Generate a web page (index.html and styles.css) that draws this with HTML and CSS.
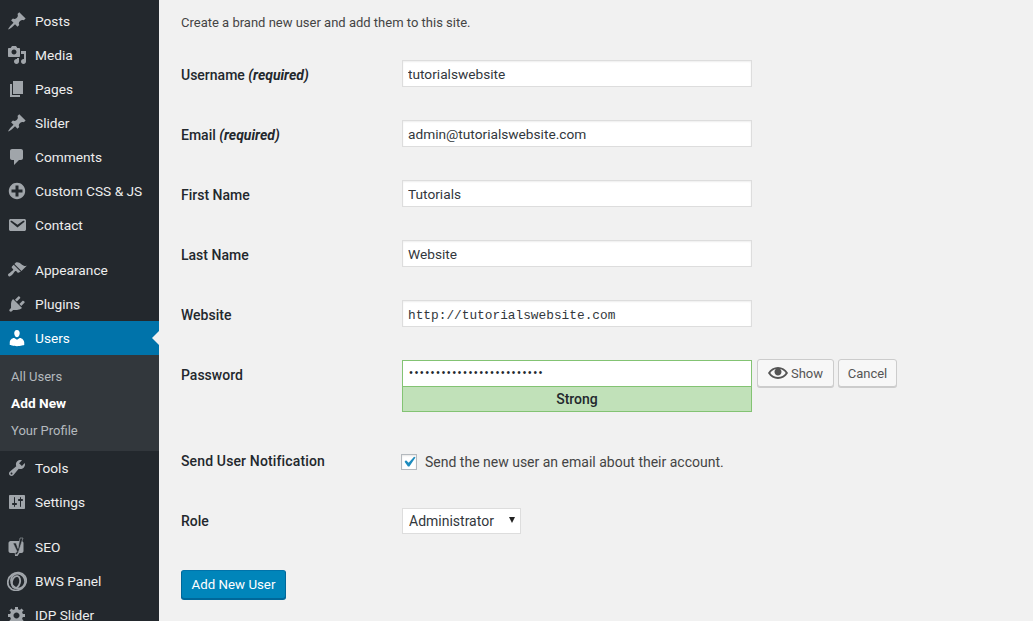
FILE: index.html
```html
<!DOCTYPE html>
<html lang="en">
<head>
    <meta charset="UTF-8">
    <title>Add New User</title>
    <link rel="stylesheet" href="styles.css">
</head>
<body>
    <nav class="sidebar">
        <ul class="menu">
            <li><svg viewBox="0 0 20 20"><path d="M10.44 3.02l1.82-1.82 6.36 6.35-1.83 1.82c-1.05-.68-2.48-.57-3.41.36l-.75.75c-.92.93-1.04 2.35-.35 3.41l-1.83 1.82-2.41-2.41-2.8 2.79c-.42.42-3.38 2.71-3.8 2.29s1.86-3.39 2.28-3.81l2.79-2.79L4.1 9.36l1.83-1.82c1.05.69 2.48.57 3.4-.36l.75-.75c.93-.92 1.05-2.35.36-3.41z"/></svg>Posts</li>
            <li><svg viewBox="0 0 20 20"><path d="M13 11V4c0-.55-.45-1-1-1h-1.67L9 1H5L3.67 3H2c-.55 0-1 .45-1 1v7c0 .55.45 1 1 1h10c.55 0 1-.45 1-1zM7 4.5c1.38 0 2.5 1.12 2.5 2.5S8.38 9.5 7 9.5 4.5 8.38 4.5 7 5.62 4.5 7 4.5zM14 6h5v10.5c0 1.38-1.12 2.5-2.5 2.5S14 17.88 14 16.5s1.12-2.5 2.5-2.5c.17 0 .34.02.5.05V9h-3V6zm-4 8.05V13h2v3.5c0 1.38-1.12 2.5-2.5 2.5S7 17.88 7 16.5 8.12 14 9.5 14c.17 0 .34.02.5.05z"/></svg>Media</li>
            <li><svg viewBox="0 0 20 20"><path d="M6 15V2h10v13H6zm-1 1h8v2H3V5h2v11z"/></svg>Pages</li>
            <li><svg viewBox="0 0 20 20"><path d="M10.44 3.02l1.82-1.82 6.36 6.35-1.83 1.82c-1.05-.68-2.48-.57-3.41.36l-.75.75c-.92.93-1.04 2.35-.35 3.41l-1.83 1.82-2.41-2.41-2.8 2.79c-.42.42-3.38 2.71-3.8 2.29s1.86-3.39 2.28-3.81l2.79-2.79L4.1 9.36l1.83-1.82c1.05.69 2.48.57 3.4-.36l.75-.75c.93-.92 1.05-2.35.36-3.41z"/></svg>Slider</li>
            <li><svg viewBox="0 0 20 20"><path d="M5 2h9c1.1 0 2 .9 2 2v7c0 1.1-.9 2-2 2h-2l-5 5v-5H5c-1.1 0-2-.9-2-2V4c0-1.1.9-2 2-2z"/></svg>Comments</li>
            <li><svg viewBox="0 0 20 20"><path d="M15.8 4.2c3.2 3.21 3.2 8.39 0 11.6-3.21 3.2-8.39 3.2-11.6 0C1 12.59 1 7.41 4.2 4.2 7.41 1 12.59 1 15.8 4.2zm-4.3 11.3v-4h4v-3h-4v-4h-3v4h-4v3h4v4h3z"/></svg>Custom CSS &amp; JS</li>
            <li><svg viewBox="0 0 20 20"><path d="M3.87 4h13.25C18.37 4 19 4.59 19 5.79v8.42c0 1.19-.63 1.79-1.88 1.79H3.87c-1.25 0-1.88-.6-1.88-1.79V5.79c0-1.2.63-1.79 1.88-1.79zm6.62 8.6l6.74-5.53c.24-.2.43-.66.13-1.07-.29-.41-.82-.42-1.17-.17l-5.7 3.86L4.8 5.83c-.35-.25-.88-.24-1.17.17-.3.41-.11.87.13 1.07z"/></svg>Contact</li>
        </ul>
        <ul class="menu">
            <li><svg viewBox="0 0 20 20"><path d="M14.48 11.06L7.41 3.99l1.5-1.5c.5-.56 2.3-.47 3.51.32 1.21.8 1.43 1.28 2.91 2.1 1.18.64 2.45 1.26 4.45.85zm-.71.71L6.7 4.7 4.93 6.47c-.39.39-.39 1.02 0 1.41l1.06 1.06c.39.39.39 1.03 0 1.42-.6.6-1.43 1.11-2.21 1.69-.35.26-.7.53-1.01.84C1.43 13.23.4 14.81 1.2 15.6l.53.53c.79.8 2.38-.22 3.71-1.56.31-.31.58-.66.85-1.02.57-.78 1.08-1.61 1.69-2.21.39-.39 1.02-.39 1.41 0l1.06 1.06c.39.39 1.02.39 1.41 0z"/></svg>Appearance</li>
            <li><svg viewBox="0 0 20 20"><path d="M13.11 4.36L9.87 7.6 8 5.73l3.24-3.24c.35-.34 1.05-.2 1.56.32.52.51.66 1.21.31 1.55zm-8 1.77l.91-1.12 9.01 9.01-1.19.84c-.71.71-2.63 1.16-3.82 1.16H6.14L4.9 17.26c-.59.59-1.54.59-2.12 0-.59-.58-.59-1.53 0-2.12l1.24-1.24v-3.88c0-1.13.4-3.19 1.09-3.89zm7.26 3.97l3.24-3.24c.34-.35 1.04-.21 1.55.31.52.51.66 1.21.31 1.55l-3.24 3.25z"/></svg>Plugins</li>
            <li class="current"><svg viewBox="0 0 20 20"><path d="M10 9.25c-2.27 0-2.73-3.44-2.73-3.44C7 4.02 7.82 2 9.97 2c2.16 0 2.98 2.02 2.71 3.81 0 0-.41 3.44-2.68 3.44zm0 2.57L12.72 10c2.39 0 4.52 2.33 4.52 4.53v2.49s-3.65 1.13-7.24 1.13c-3.65 0-7.24-1.13-7.24-1.13v-2.49c0-2.25 1.94-4.48 4.47-4.48z"/></svg>Users</li>
        </ul>
        <ul class="submenu">
            <li>All Users</li>
            <li class="active">Add New</li>
            <li>Your Profile</li>
        </ul>
        <ul class="menu">
            <li><svg viewBox="0 0 20 20"><path d="M16.68 9.77c-1.34 1.34-3.3 1.67-4.95.99l-5.41 6.52c-.99.99-2.59.99-3.58 0s-.99-2.59 0-3.57l6.52-5.42c-.68-1.65-.35-3.61.99-4.95 1.28-1.28 3.12-1.62 4.72-1.06l-2.89 2.89 2.82 2.82 2.86-2.87c.53 1.58.18 3.39-1.08 4.65zM3.81 16.21c.4.39 1.04.39 1.43 0 .4-.4.4-1.04 0-1.43-.39-.4-1.03-.4-1.43 0-.39.39-.39 1.03 0 1.43z"/></svg>Tools</li>
            <li><svg viewBox="0 0 20 20"><path fill-rule="evenodd" d="M18 16V4c0-.55-.45-1-1-1H3c-.55 0-1 .45-1 1v12c0 .55.45 1 1 1h14c.55 0 1-.45 1-1zM8 11h1c.55 0 1 .45 1 1s-.45 1-1 1H8v1.5c0 .28-.22.5-.5.5s-.5-.22-.5-.5V13H6c-.55 0-1-.45-1-1s.45-1 1-1h1V5.5c0-.28.22-.5.5-.5s.5.22.5.5V11zm5-2h-1c-.55 0-1-.45-1-1s.45-1 1-1h1V5.5c0-.28.22-.5.5-.5s.5.22.5.5V7h1c.55 0 1 .45 1 1s-.45 1-1 1h-1v5.5c0 .28-.22.5-.5.5s-.5-.22-.5-.5V9z"/></svg>Settings</li>
        </ul>
        <ul class="menu">
            <li><svg viewBox="0 0 20 20"><path d="M3.5 4h11c1 0 2 1 2 2v8c0 1-1 2-2 2h-2l-2 3H8v-3H3.5c-1 0-2-1-2-2V6c0-1 1-2 2-2z"/><path class="cut" d="M13 1h3l-4.500 14c-.5 1.500-1.500 2.500-3 3l-.5-2c1-.3 1.600-.8 2-1.600L6 6h3l2 5.500z"/></svg>SEO</li>
            <li><svg viewBox="0 0 20 20" class="rings"><ellipse cx="10" cy="10.500" rx="9.500" ry="8.500" transform="rotate(-35 10 10.500)"/><ellipse cx="11" cy="10" rx="7" ry="7.500" transform="rotate(-20 11 10)"/><ellipse cx="9" cy="11" rx="4" ry="6" transform="rotate(15 9 11)"/></svg>BWS Panel</li>
            <li><svg viewBox="0 0 20 20"><path d="M18 12h-2.180c-.17.7-.44 1.350-.81 1.930l1.540 1.540-2.100 2.100-1.540-1.540c-.58.36-1.230.63-1.910.79V19H8v-2.180c-.68-.16-1.330-.43-1.910-.79l-1.540 1.540-2.120-2.120 1.540-1.540c-.36-.58-.63-1.230-.79-1.910H1V9.030h2.170c.16-.7.44-1.350.8-1.940L2.430 5.550l2.100-2.100 1.540 1.540c.58-.37 1.240-.64 1.930-.81V2h3v2.180c.68.16 1.330.43 1.910.79l1.540-1.540 2.120 2.120-1.540 1.540c.36.59.64 1.240.8 1.940H18V12zm-8.500 1.500c1.660 0 3-1.340 3-3s-1.340-3-3-3-3 1.340-3 3 1.340 3 3 3z"/></svg>IDP Slider</li>
        </ul>
    </nav>
    <main class="content">
        <p class="intro">Create a brand new user and add them to this site.</p>
        <form class="user-form">
            <div class="row">
                <label for="username">Username <em>(required)</em></label>
                <input id="username" class="field" type="text" value="tutorialswebsite">
            </div>
            <div class="row">
                <label for="email">Email <em>(required)</em></label>
                <input id="email" class="field" type="text" value="admin@tutorialswebsite.com">
            </div>
            <div class="row">
                <label for="first">First Name</label>
                <input id="first" class="field" type="text" value="Tutorials">
            </div>
            <div class="row">
                <label for="last">Last Name</label>
                <input id="last" class="field" type="text" value="Website">
            </div>
            <div class="row">
                <label for="url">Website</label>
                <input id="url" class="field mono" type="text" value="http://tutorialswebsite.com">
            </div>
            <div class="row">
                <label for="pass">Password</label>
                <div class="pass-box">
                    <input id="pass" class="field pass" type="password" value="aaaaaaaaaaaaaaaaaaaaaaaaa">
                    <div class="meter">Strong</div>
                </div>
                <div class="pass-actions">
                    <button type="button" class="button show"><svg viewBox="0 0 20 20"><path d="M19.700 9.400C17.700 6 14 3.900 10 3.900S2.300 6 .3 9.400L0 10l.3.6c2 3.400 5.700 5.500 9.700 5.500s7.700-2.100 9.700-5.500l.3-.6-.3-.6zM10 14.100c-3.100 0-6-1.600-7.700-4.100C3.600 8 5.700 6.600 8 6.100c-.9.6-1.500 1.700-1.500 2.900 0 1.900 1.600 3.500 3.500 3.500s3.500-1.600 3.500-3.500c0-1.200-.6-2.300-1.500-2.900 2.300.5 4.400 1.900 5.700 3.900-1.700 2.500-4.600 4.100-7.700 4.100z"/></svg>Show</button>
                    <button type="button" class="button cancel">Cancel</button>
                </div>
            </div>
            <div class="row notify">
                <label for="notify">Send User Notification</label>
                <div class="check-line">
                    <input id="notify" class="check" type="checkbox" checked>
                    <span>Send the new user an email about their account.</span>
                </div>
            </div>
            <div class="row role">
                <label for="role">Role</label>
                <div class="select-wrap">
                    <select id="role" class="select">
                        <option>Administrator</option>
                    </select>
                </div>
            </div>
            <div class="submit-row">
                <button type="button" class="primary">Add New User</button>
            </div>
        </form>
    </main>
</body>
</html>
```

FILE: styles.css
```css
* {
    box-sizing: border-box;
}
html, body {
    height: 100%;
}
body {
    margin: 0;
    display: flex;
    overflow: hidden;
    background: #f1f1f1;
    color: #444;
    font-family: Roboto, sans-serif;
    font-size: 14px;
}

ul {
    list-style: none;
    margin: 0;
    padding: 0;
}

.sidebar {
    width: 159px;
    flex: none;
    padding-top: 4px;
    background: #23282d;
    color: #eee;
    font-size: 13.700px;
    height: 100%;
    overflow: hidden;
}
.menu {
    margin-bottom: 11px;
}
.menu li {
    display: flex;
    align-items: center;
    height: 34px;
    padding-left: 7px;
    gap: 8px;
}
.menu svg {
    width: 20px;
    height: 20px;
    flex: none;
    fill: #a0a5aa;
}
.menu svg .cut {
    fill: #23282d;
    stroke: #a0a5aa;
    stroke-width: .6;
}
.menu svg.rings {
    fill: none;
    stroke: #a0a5aa;
    stroke-width: 1.8;
}
.menu:has(+ .submenu) {
    margin-bottom: 0;
}
.menu li.current {
    position: relative;
    background: #0073aa;
    color: #fff;
}
.menu li.current svg {
    fill: #fff;
}
.menu li.current::after {
    content: "";
    position: absolute;
    right: 0;
    top: 10px;
    border: 7px solid transparent;
    border-left-width: 0;
    border-right-color: #f1f1f1;
}
.submenu {
    background: #32373c;
    padding: 8px 0 7px;
}
.submenu li {
    height: 27px;
    line-height: 27px;
    padding-left: 11px;
    font-size: 13px;
    color: #b4b9be;
}
.submenu li.active {
    color: #fff;
    font-size: 13.700px;
    font-weight: 700;
}

.content {
    flex: 1;
    padding: 0 0 0 22px;
}
.intro {
    margin: 14px 0 0;
    line-height: 18px;
    font-size: 13px;
}

.user-form {
    display: flex;
    flex-direction: column;
    gap: 33px;
    margin-top: 28px;
}
.row {
    display: flex;
    align-items: flex-start;
}
.row > label {
    width: 221px;
    flex: none;
    padding-top: 6px;
    line-height: 18px;
    color: #23282d;
    font-weight: 500;
}
.row > label em {
    font-weight: 700;
}
.field {
    display: block;
    width: 350px;
    height: 27px;
    margin: 0;
    padding: 3px 5px;
    border: 1px solid #ddd;
    box-shadow: inset 0 1px 2px rgba(0,0,0,.07);
    background: #fff;
    color: #32373c;
    font-family: inherit;
    font-size: 13.700px;
    outline: none;
}
.field.mono {
    padding: 5px 5px 1px;
    font-family: "Liberation Mono", monospace;
    font-size: 12.800px;
}
.pass-box {
    width: 350px;
}
.field.pass {
    font-family: "Liberation Mono", monospace;
    font-size: 10px;
    letter-spacing: -.6px;
    color: #23282d;
    border-color: #83c373;
    border-bottom: 0;
    box-shadow: none;
    height: 26px;
}
.meter {
    height: 26px;
    line-height: 24px;
    border: 1px solid #83c373;
    background: #c1e1b9;
    color: #23282d;
    text-align: center;
    font-weight: 500;
}
.pass-actions {
    display: flex;
    gap: 4px;
    margin: -1px 0 0 5px;
}
.button {
    display: flex;
    align-items: center;
    justify-content: center;
    gap: 3px;
    height: 28px;
    padding: 0;
    border: 1px solid #ccc;
    border-radius: 3px;
    box-shadow: 0 1px 0 #ccc;
    background: #f7f7f7;
    color: #555;
    font-family: inherit;
    font-size: 13px;
}
.button.show {
    width: 77px;
}
.button.cancel {
    width: 59px;
}
.button svg {
    width: 20px;
    height: 20px;
    fill: #555;
}

.notify {
    margin-top: 9px;
    height: 21px;
}
.notify > label {
    padding-top: 0;
    margin-top: -2px;
    letter-spacing: .14px;
}
.check-line {
    display: flex;
    align-items: center;
    gap: 8px;
    margin-left: -1px;
    height: 16px;
}
.check {
    appearance: none;
    width: 16px;
    height: 16px;
    margin: 0;
    border: 1px solid #b4b9be;
    background: #fff url("data:image/svg+xml,%3Csvg xmlns='http://www.w3.org/2000/svg' viewBox='0 0 20 20'%3E%3Cpath fill='%231e8cbe' d='M14.83 4.89l1.34.94-5.81 8.38H9.02L5.78 9.67l1.34-1.25 2.57 2.4z'/%3E%3C/svg%3E") center / 21px no-repeat;
    box-shadow: inset 0 1px 2px rgba(0,0,0,.1);
}

.role > label {
    padding-top: 4px;
}
.select-wrap {
    position: relative;
    width: 119px;
}
.select-wrap::after {
    content: "";
    position: absolute;
    right: 6px;
    top: 9px;
    border: 3.500px solid transparent;
    border-top: 6px solid #222;
    border-bottom: 0;
}
.select {
    appearance: none;
    display: block;
    width: 100%;
    height: 26px;
    padding: 0 6px;
    border: 1px solid #ddd;
    border-radius: 0;
    background: #fff;
    color: #32373c;
    font-family: inherit;
    font-size: 14px;
    outline: none;
}

.submit-row {
    margin-top: 3px;
}
.primary {
    height: 29px;
    width: 105px;
    padding: 0 0 1px;
    border: 1px solid #006799;
    border-top-color: #0073aa;
    border-radius: 3px;
    box-shadow: 0 1px 0 #006799;
    background: #0085ba;
    color: #fff;
    font-family: inherit;
    font-size: 13.300px;
}
```
